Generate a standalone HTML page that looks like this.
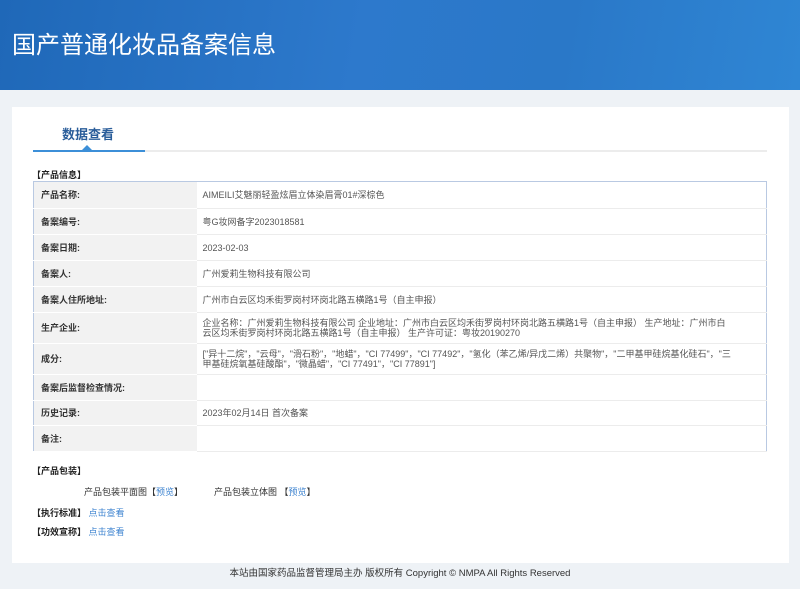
<!DOCTYPE html>
<html><head><meta charset="utf-8"><style>
*{margin:0;padding:0;box-sizing:border-box}
body{width:800px;height:589px;background:#eef2f6;font-family:"Liberation Sans","Noto Sans CJK SC",sans-serif;position:relative;overflow:hidden;color:#333}
.hd{position:absolute;left:0;top:0;width:800px;height:90px;background:linear-gradient(100deg,#1f68b8 0%,#2d79cc 45%,#2a78c8 70%,#2f86d4 100%)}
.hd h1{position:absolute;left:12px;top:25px;font-size:24px;font-weight:normal;color:#fff;font-family:"Noto Sans CJK SC",sans-serif}
.card{position:absolute;left:12px;top:107px;width:777px;height:456px;background:#fff}
.tab{position:absolute;left:50px;top:17px;font-size:13px;color:#2a5d9a;font-weight:bold}
.line{position:absolute;left:21px;top:43px;width:734px;height:2px;background:#ececec}
.line2{position:absolute;left:21px;top:43px;width:112px;height:2px;background:#3c8fd8}
.tri{position:absolute;left:70px;top:38px;width:0;height:0;border-left:5px solid transparent;border-right:5px solid transparent;border-bottom:5px solid #3c8fd8}
.sec{position:absolute;font-size:9px;font-weight:bold;color:#222}
table{position:absolute;left:21px;top:74px;width:734px;border-collapse:collapse;border:1px solid #b9c9e2;font-size:9px}
td{border-bottom:1px solid #ececec;padding:0 8px;vertical-align:middle;line-height:10px}
td.l{width:163px;background:#f2f2f2;font-weight:bold;color:#333;border-bottom:1px solid #fff;padding-left:7px}
td.v{color:#555;padding-left:6px;padding-right:32px}
.a{color:#3f84d0}
.ft{position:absolute;left:0;top:563px;width:800px;height:26px;text-align:center;font-size:9.5px;line-height:21px;color:#333}
</style></head><body>
<div class="hd"><h1>国产普通化妆品备案信息</h1></div>
<div class="card">
<div class="tab">数据查看</div>
<div class="line"></div><div class="line2"></div><div class="tri"></div>
<div class="sec" style="left:20px;top:61px">【产品信息】</div>
<table>
<tr style="height:27px"><td class="l">产品名称:</td><td class="v">AIMEILI艾魅丽轻盈炫眉立体染眉膏01#深棕色</td></tr>
<tr style="height:26px"><td class="l">备案编号:</td><td class="v">粤G妆网备字2023018581</td></tr>
<tr style="height:26px"><td class="l">备案日期:</td><td class="v">2023-02-03</td></tr>
<tr style="height:26px"><td class="l">备案人:</td><td class="v">广州爱莉生物科技有限公司</td></tr>
<tr style="height:26px"><td class="l">备案人住所地址:</td><td class="v">广州市白云区均禾街罗岗村环岗北路五横路1号（自主申报）</td></tr>
<tr style="height:31px"><td class="l">生产企业:</td><td class="v">企业名称：广州爱莉生物科技有限公司 企业地址：广州市白云区均禾街罗岗村环岗北路五横路1号（自主申报） 生产地址：广州市白云区均禾街罗岗村环岗北路五横路1号（自主申报） 生产许可证：粤妆20190270</td></tr>
<tr style="height:31px"><td class="l">成分:</td><td class="v">["异十二烷"，"云母"，"滑石粉"，"地蜡"，"CI 77499"，"CI 77492"，"氢化（苯乙烯/异戊二烯）共聚物"，"二甲基甲硅烷基化硅石"，"三甲基硅烷氧基硅酸酯"，"微晶蜡"，"CI 77491"，"CI 77891"]</td></tr>
<tr style="height:26px"><td class="l">备案后监督检查情况:</td><td class="v"></td></tr>
<tr style="height:25px"><td class="l">历史记录:</td><td class="v">2023年02月14日 首次备案</td></tr>
<tr style="height:26px"><td class="l">备注:</td><td class="v"></td></tr>
</table>
<div class="sec" style="left:20px;top:357px">【产品包装】</div>
<div style="position:absolute;left:72px;top:378px;font-size:9px;color:#333">产品包装平面图【<span class="a">预览</span>】</div>
<div style="position:absolute;left:202px;top:378px;font-size:9px;color:#333">产品包装立体图 【<span class="a">预览</span>】</div>
<div class="sec" style="left:20px;top:399px">【执行标准】 <span class="a" style="font-weight:normal">点击查看</span></div>
<div class="sec" style="left:20px;top:418px">【功效宣称】 <span class="a" style="font-weight:normal">点击查看</span></div>
</div>
<div class="ft">本站由国家药品监督管理局主办 版权所有 Copyright © NMPA All Rights Reserved</div>
</body></html>
